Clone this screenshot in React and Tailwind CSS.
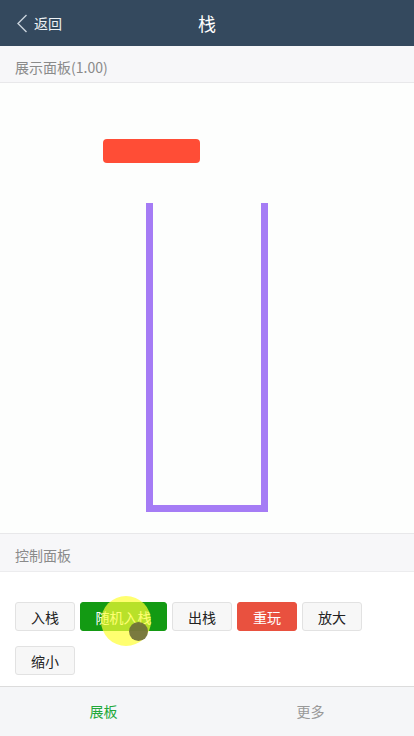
import React from "react";

const font = { fontFamily: '"Noto Sans CJK SC", "Noto Sans", sans-serif' };

function Btn({ children, variant = "default" }) {
  const cls =
    variant === "green"
      ? "bg-[#139a13] text-white border-[#139a13]"
      : variant === "red"
      ? "bg-[#e9513f] text-white border-[#e9513f]"
      : "bg-[#f7f7f7] text-[#222] border-[#e2e2e2]";
  return (
    <button
      className={`h-[29px] rounded-[3px] border text-[14px] leading-none flex items-center justify-center ${cls}`}
      style={{ width: variant === "green" ? 87 : 60 }}
    >
      {children}
    </button>
  );
}

export default function App() {
  return (
    <div className="w-[414px] h-[736px] flex flex-col bg-white relative overflow-hidden" style={font}>
      {/* Header */}
      <div className="h-[46px] bg-[#34495e] flex items-center relative shrink-0">
        <div className="flex items-center pl-[16px] text-[#e8edf2]">
          <svg width="12" height="19" viewBox="0 0 12 19" fill="none">
            <path d="M10.5 1 L2 9.5 L10.5 18" stroke="#c9d2db" strokeWidth="1.4" />
          </svg>
          <span className="ml-[6px] text-[14px] text-[#eef2f5]">返回</span>
        </div>
        <div className="absolute left-0 right-0 text-center text-white text-[18px] pointer-events-none">栈</div>
      </div>

      {/* Display panel header */}
      <div className="h-[37px] bg-[#f7f7f9] border-b border-[#e8e8ea] flex items-center pl-[15px] pt-[6px] text-[14px] text-[#8a8a8a] shrink-0">
        展示面板(1.00)
      </div>

      {/* Display area */}
      <div className="flex-1 bg-[#fdfefd] relative border-b border-[#e8e8ea]">
        <div className="absolute left-[103px] top-[56px] w-[97px] h-[24px] rounded-[4px] bg-[#ff4d36]" />
        <div className="absolute left-[146px] top-[120px] w-[122px] h-[309px] border-[7px] border-t-0 border-[#a57cf5]" />
      </div>

      {/* Control panel header */}
      <div className="h-[38px] bg-[#f7f7f9] border-b border-[#ececee] flex items-center pl-[15px] pt-[6px] text-[14px] text-[#8a8a8a] shrink-0">
        控制面板
      </div>

      {/* Buttons */}
      <div className="h-[114px] bg-white px-[15px] pt-[30px] shrink-0">
        <div className="flex flex-wrap gap-x-[5px] gap-y-[15px]">
          <Btn>入栈</Btn>
          <Btn variant="green">随机入栈</Btn>
          <Btn>出栈</Btn>
          <Btn variant="red">重玩</Btn>
          <Btn>放大</Btn>
          <Btn>缩小</Btn>
        </div>
      </div>

      {/* Tab bar */}
      <div className="h-[50px] bg-[#f5f6f8] border-t border-[#dcdcdc] flex shrink-0">
        <div className="flex-1 flex items-center justify-center text-[14px] text-[#22a83a]">展板</div>
        <div className="flex-1 flex items-center justify-center text-[14px] text-[#999]">更多</div>
      </div>

      {/* Touch indicator overlay */}
      <div className="absolute left-[101px] top-[596px] w-[50px] h-[50px] rounded-full bg-[#ffff33]/70" />
      <div className="absolute left-[129px] top-[622px] w-[19px] h-[19px] rounded-full bg-[#6b6b3a]/90" />
    </div>
  );
}
